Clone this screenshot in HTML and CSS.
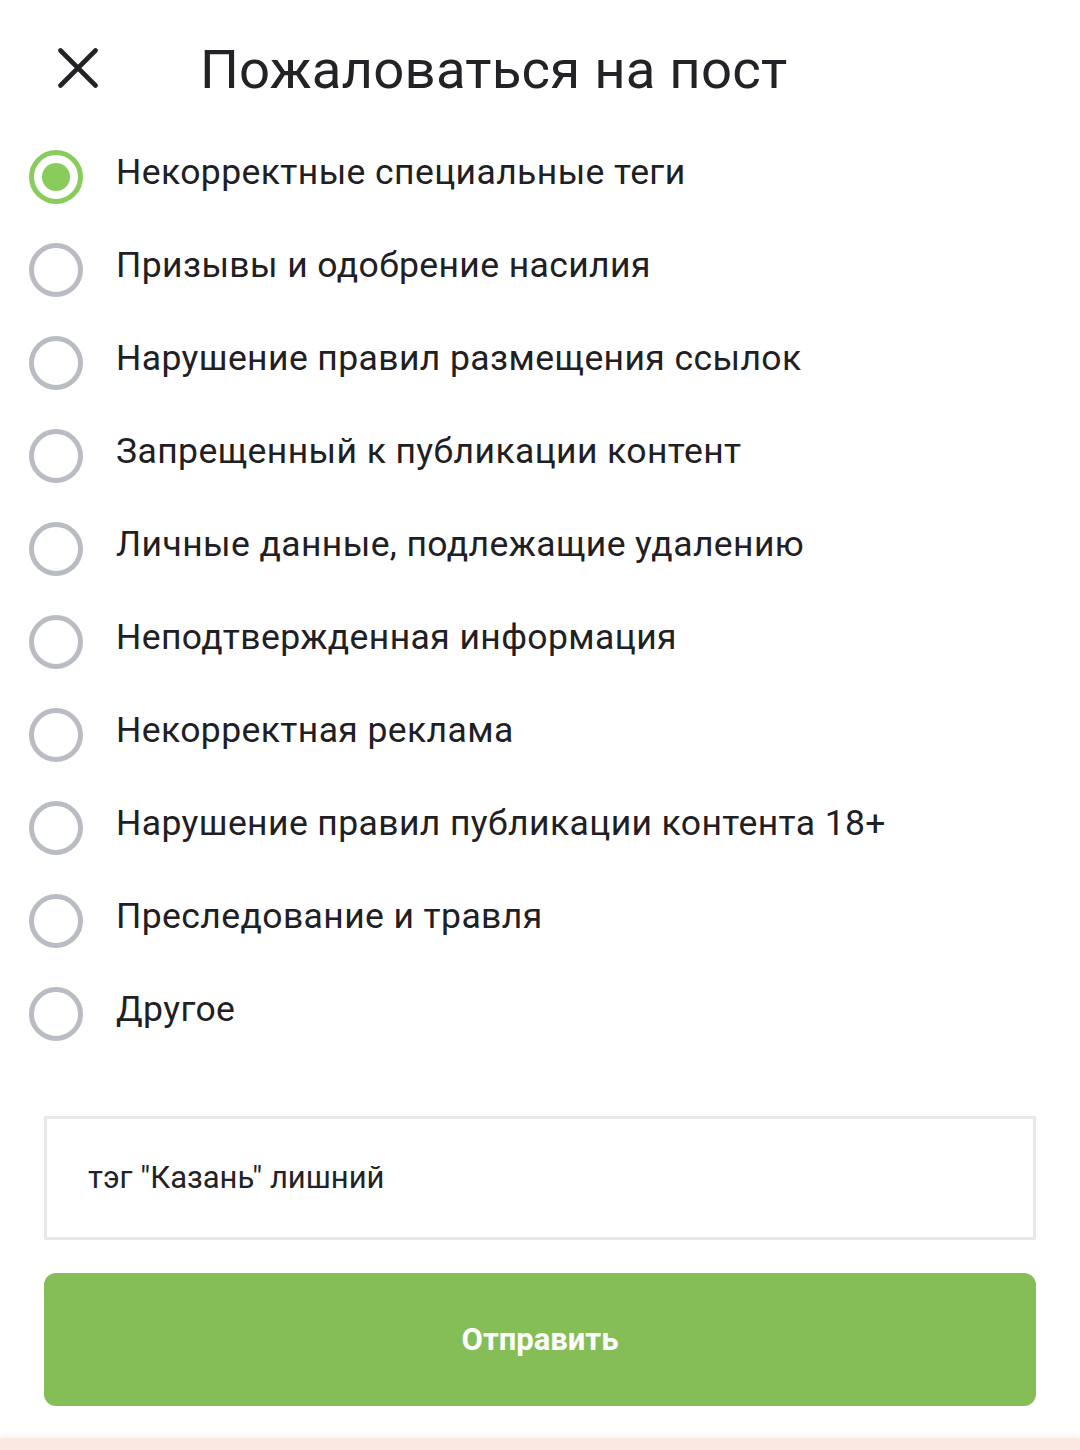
FILE: index.html
```html
<!DOCTYPE html>
<html lang="ru">
<head>
<meta charset="utf-8">
<title>Пожаловаться на пост</title>
<link rel="stylesheet" href="styles.css">
</head>
<body>
<div class="page">
  <header class="header">
    <button class="close" aria-label="Закрыть">
      <svg width="40" height="40" viewBox="0 0 40 40"><path d="M2.5 2.5 L37.5 37.5 M37.5 2.5 L2.5 37.5" stroke="#222326" stroke-width="4.6" stroke-linecap="round" fill="none"/></svg>
    </button>
    <h1 class="title">Пожаловаться на пост</h1>
  </header>
  <ul class="options">
    <li class="option selected"><span class="radio"></span><span class="label">Некорректные специальные теги</span></li>
    <li class="option"><span class="radio"></span><span class="label">Призывы и одобрение насилия</span></li>
    <li class="option"><span class="radio"></span><span class="label">Нарушение правил размещения ссылок</span></li>
    <li class="option"><span class="radio"></span><span class="label">Запрещенный к публикации контент</span></li>
    <li class="option"><span class="radio"></span><span class="label">Личные данные, подлежащие удалению</span></li>
    <li class="option"><span class="radio"></span><span class="label">Неподтвержденная информация</span></li>
    <li class="option"><span class="radio"></span><span class="label">Некорректная реклама</span></li>
    <li class="option"><span class="radio"></span><span class="label">Нарушение правил публикации контента 18+</span></li>
    <li class="option"><span class="radio"></span><span class="label">Преследование и травля</span></li>
    <li class="option"><span class="radio"></span><span class="label">Другое</span></li>
  </ul>
  <div class="field">тэг "Казань" лишний</div>
  <button class="submit">Отправить</button>
</div>
<div class="strip"></div>
</body>
</html>
```
FILE: styles.css
```css
* { box-sizing: border-box; }
html, body { margin: 0; padding: 0; background: #ffffff; }
body {
  font-family: Roboto, "Noto Sans", "Liberation Sans", sans-serif;
  color: #1f2024;
  width: 1080px;
  height: 1450px;
  overflow: hidden;
  display: flex;
  flex-direction: column;
}
.page {
  flex: 1;
  display: flex;
  flex-direction: column;
}
.header {
  display: flex;
  align-items: center;
  height: 140px;
  padding-left: 58px;
}
.close {
  border: 0;
  background: none;
  padding: 0;
  width: 40px;
  height: 40px;
  display: flex;
  margin-top: -4px;
}
.title {
  margin: -2px 0 0 102px;
  font-weight: 400;
  font-size: 54.5px;
  color: #222326;
  letter-spacing: 0.2px;
}
.options {
  list-style: none;
  margin: -10px 0 0 0;
  padding: 0 0 0 29px;
}
.option {
  display: flex;
  align-items: center;
  height: 93px;
}
.radio {
  width: 54px;
  height: 54px;
  border-radius: 50%;
  border: 5px solid #b9bcc3;
  flex: none;
  display: flex;
  align-items: center;
  justify-content: center;
}
.selected .radio { border-color: #8acb5e; }
.selected .radio::after {
  content: "";
  width: 28px;
  height: 28px;
  border-radius: 50%;
  background: #8acb5e;
}
.label {
  margin-left: 33px;
  font-size: 35.5px;
  padding-bottom: 10px;
  letter-spacing: 0.4px;
}
.field {
  margin: 56px 44px 0 44px;
  height: 124px;
  border: 3px solid #e8e8e8;
  display: flex;
  align-items: center;
  padding-left: 41px;
  font-size: 31px;
  color: #222326;
  padding-bottom: 2px;
}
.submit {
  margin: 33px 44px 0 44px;
  height: 133px;
  border: 0;
  border-radius: 12px;
  background: #85be57;
  color: #ffffff;
  font-family: Roboto, "Noto Sans", "Liberation Sans", sans-serif;
  font-weight: 700;
  font-size: 31px;
}
.strip {
  height: 12px;
  background: #fce8e3;
  box-shadow: 0 -3px 6px rgba(0,0,0,0.04);
}
```
